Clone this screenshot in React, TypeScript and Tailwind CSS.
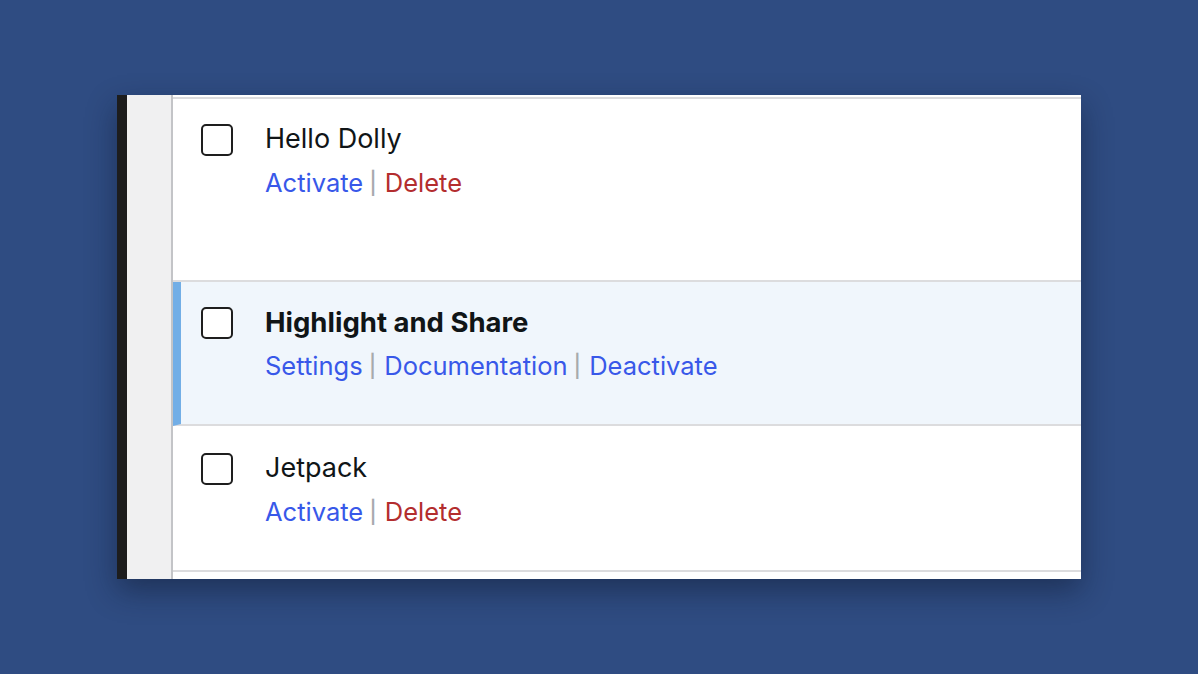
import React from 'react'

type Action = { label: string; danger?: boolean }

interface Plugin {
  name: string
  active?: boolean
  actions: Action[]
  height: string
  pad: string
}

const plugins: Plugin[] = [
  {
    name: 'Hello Dolly',
    actions: [{ label: 'Activate' }, { label: 'Delete', danger: true }],
    height: 'h-[183px]',
    pad: 'pt-[22px]',
  },
  {
    name: 'Highlight and Share',
    active: true,
    actions: [{ label: 'Settings' }, { label: 'Documentation' }, { label: 'Deactivate' }],
    height: 'h-[144px]',
    pad: 'pt-[22px]',
  },
  {
    name: 'Jetpack',
    actions: [{ label: 'Activate' }, { label: 'Delete', danger: true }],
    height: 'h-[146px]',
    pad: 'pt-[24px]',
  },
]

function PluginRow({ plugin }: { plugin: Plugin }) {
  return (
    <div
      className={`flex items-start border-b-2 border-[#dcdcde] ${plugin.height} ${plugin.pad} ${
        plugin.active ? 'bg-[#f0f6fc] border-l-[8px] border-l-[#72aee6] pl-[20px]' : 'bg-white pl-[28px]'
      }`}
    >
      <div className="mt-[3px] w-[32px] h-[32px] shrink-0 rounded-[5px] border-2 border-[#1e1e1e] bg-white" />
      <div className="ml-[32px] flex flex-col gap-[8px]">
        <div
          className={`leading-[36px] text-[#101517] ${
            plugin.active ? 'text-[27.5px] font-bold' : 'text-[27px] font-normal'
          }`}
        >
          {plugin.name}
        </div>
        <div className="flex items-center text-[25.5px] leading-[36px]">
          {plugin.actions.map((a, i) => (
            <span key={a.label} className="flex items-center">
              {i > 0 && <span className="ml-[6px] mr-[8px] text-[22px] font-medium text-[#a7aaad]">|</span>}
              <a className={a.danger ? 'text-[#b32d2e]' : 'text-[#3858e9]'}>{a.label}</a>
            </span>
          ))}
        </div>
      </div>
    </div>
  )
}

export default function App() {
  return (
    <div
      className="w-[1198px] h-[674px] bg-[#2f4c82] pt-[95px] pl-[117px]"
      style={{ fontFamily: 'Inter, "Noto Sans", sans-serif' }}
    >
      <div className="flex w-[964px] h-[484px] shadow-[0_12px_28px_rgba(10,20,40,0.45)]">
        <div className="w-[10px] bg-[#1d1d1d]" />
        <div className="w-[46px] bg-[#f0f0f1] border-r-2 border-[#c3c4c7]" />
        <div className="flex-1 flex flex-col bg-white">
          <div className="h-[2px]" />
          <div className="border-t-2 border-[#dcdcde]" />
          {plugins.map((p) => (
            <PluginRow key={p.name} plugin={p} />
          ))}
        </div>
      </div>
    </div>
  )
}
